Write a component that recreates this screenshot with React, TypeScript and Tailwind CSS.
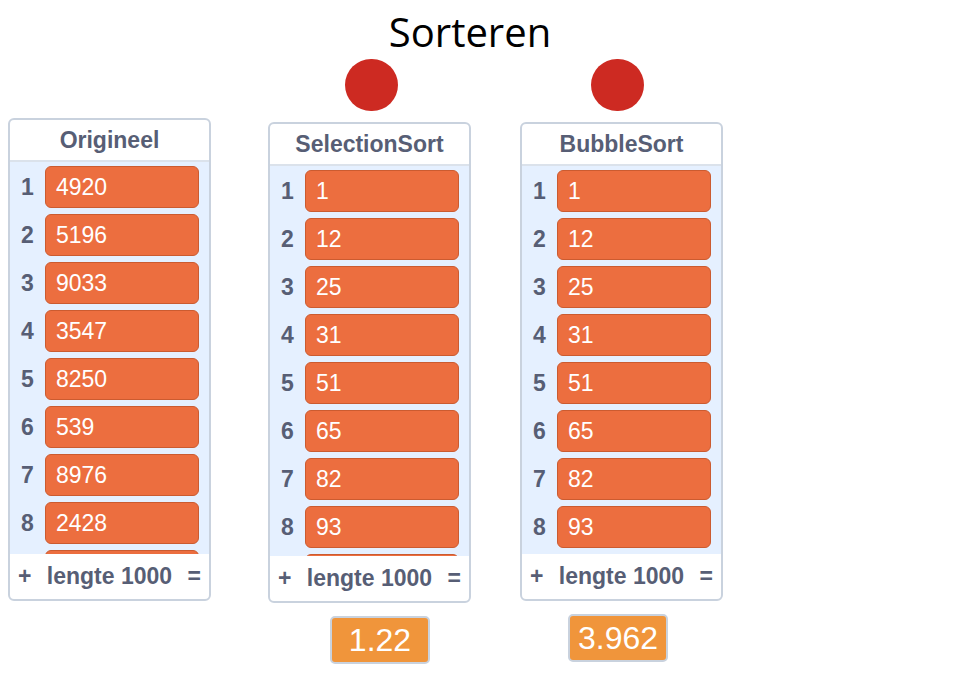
import React from 'react';

type ListProps = {
  title: string;
  items: string[];
  left: string;
  top: string;
  height: string;
};

const font = { fontFamily: '"Liberation Sans", Arial, sans-serif' };

const ListMonitor = ({ title, items, left, top, height }: ListProps) => {
  return (
    <div
      className={`absolute ${left} ${top} ${height} w-[203px] flex flex-col rounded-[6px] border-2 border-[#c9d2de] bg-white overflow-hidden`}
      style={font}
    >
      <div className="h-[42px] shrink-0 flex items-center justify-center border-b-2 border-[#dbe2eb] text-[23px] leading-none font-bold text-[#575e75]">
        {title}
      </div>
      <div className="flex-1 bg-[#e5f0ff] overflow-hidden">
        {items.map((v, i) => (
          <div key={i} className="h-12 flex items-start pt-[4px]">
            <div className="w-[35px] h-[42px] flex items-center justify-center text-[23px] leading-none font-bold text-[#575e75]">
              {i + 1}
            </div>
            <div className="w-[154px] h-[42px] rounded-[6px] border border-[#cb5b30] bg-[#ec6e3f] flex items-center px-[10px] text-[23px] leading-none text-white">
              {v}
            </div>
          </div>
        ))}
      </div>
      <div className="h-[45px] shrink-0 flex items-center justify-between px-[8px] text-[23px] leading-none font-bold text-[#575e75]">
        <span>+</span>
        <span>lengte 1000</span>
        <span>=</span>
      </div>
    </div>
  );
};

const sorted = ['1', '12', '25', '31', '51', '65', '82', '93', '99'];

export default function App() {
  return (
    <div className="relative w-[956px] h-[680px] bg-white overflow-hidden">
      <div
        className="absolute left-[370px] w-[200px] top-[2px] text-center text-[40px] font-medium text-black"
        style={{ fontFamily: '"Open Sans", "Noto Sans", sans-serif' }}
      >
        Sorteren
      </div>

      <div className="absolute left-[345px] top-[59px] w-[53px] h-[52px] rounded-full bg-[#cd2a22]" />
      <div className="absolute left-[591px] top-[59px] w-[53px] h-[52px] rounded-full bg-[#cd2a22]" />

      <ListMonitor
        title="Origineel"
        items={['4920', '5196', '9033', '3547', '8250', '539', '8976', '2428', '7012']}
        left="left-[8px]"
        top="top-[118px]"
        height="h-[483px]"
      />
      <ListMonitor
        title="SelectionSort"
        items={sorted}
        left="left-[268px]"
        top="top-[122px]"
        height="h-[481px]"
      />
      <ListMonitor
        title="BubbleSort"
        items={sorted}
        left="left-[520px]"
        top="top-[122px]"
        height="h-[479px]"
      />

      <div
        className="absolute left-[330px] top-[616px] w-[100px] h-[48px] rounded-[5px] border-2 border-[#c9d2de] bg-[#f0953b] flex items-center justify-center text-[32px] leading-none text-white"
        style={font}
      >
        1.22
      </div>
      <div
        className="absolute left-[568px] top-[614px] w-[100px] h-[48px] rounded-[5px] border-2 border-[#c9d2de] bg-[#f0953b] flex items-center justify-center text-[32px] leading-none text-white"
        style={font}
      >
        3.962
      </div>
    </div>
  );
}
